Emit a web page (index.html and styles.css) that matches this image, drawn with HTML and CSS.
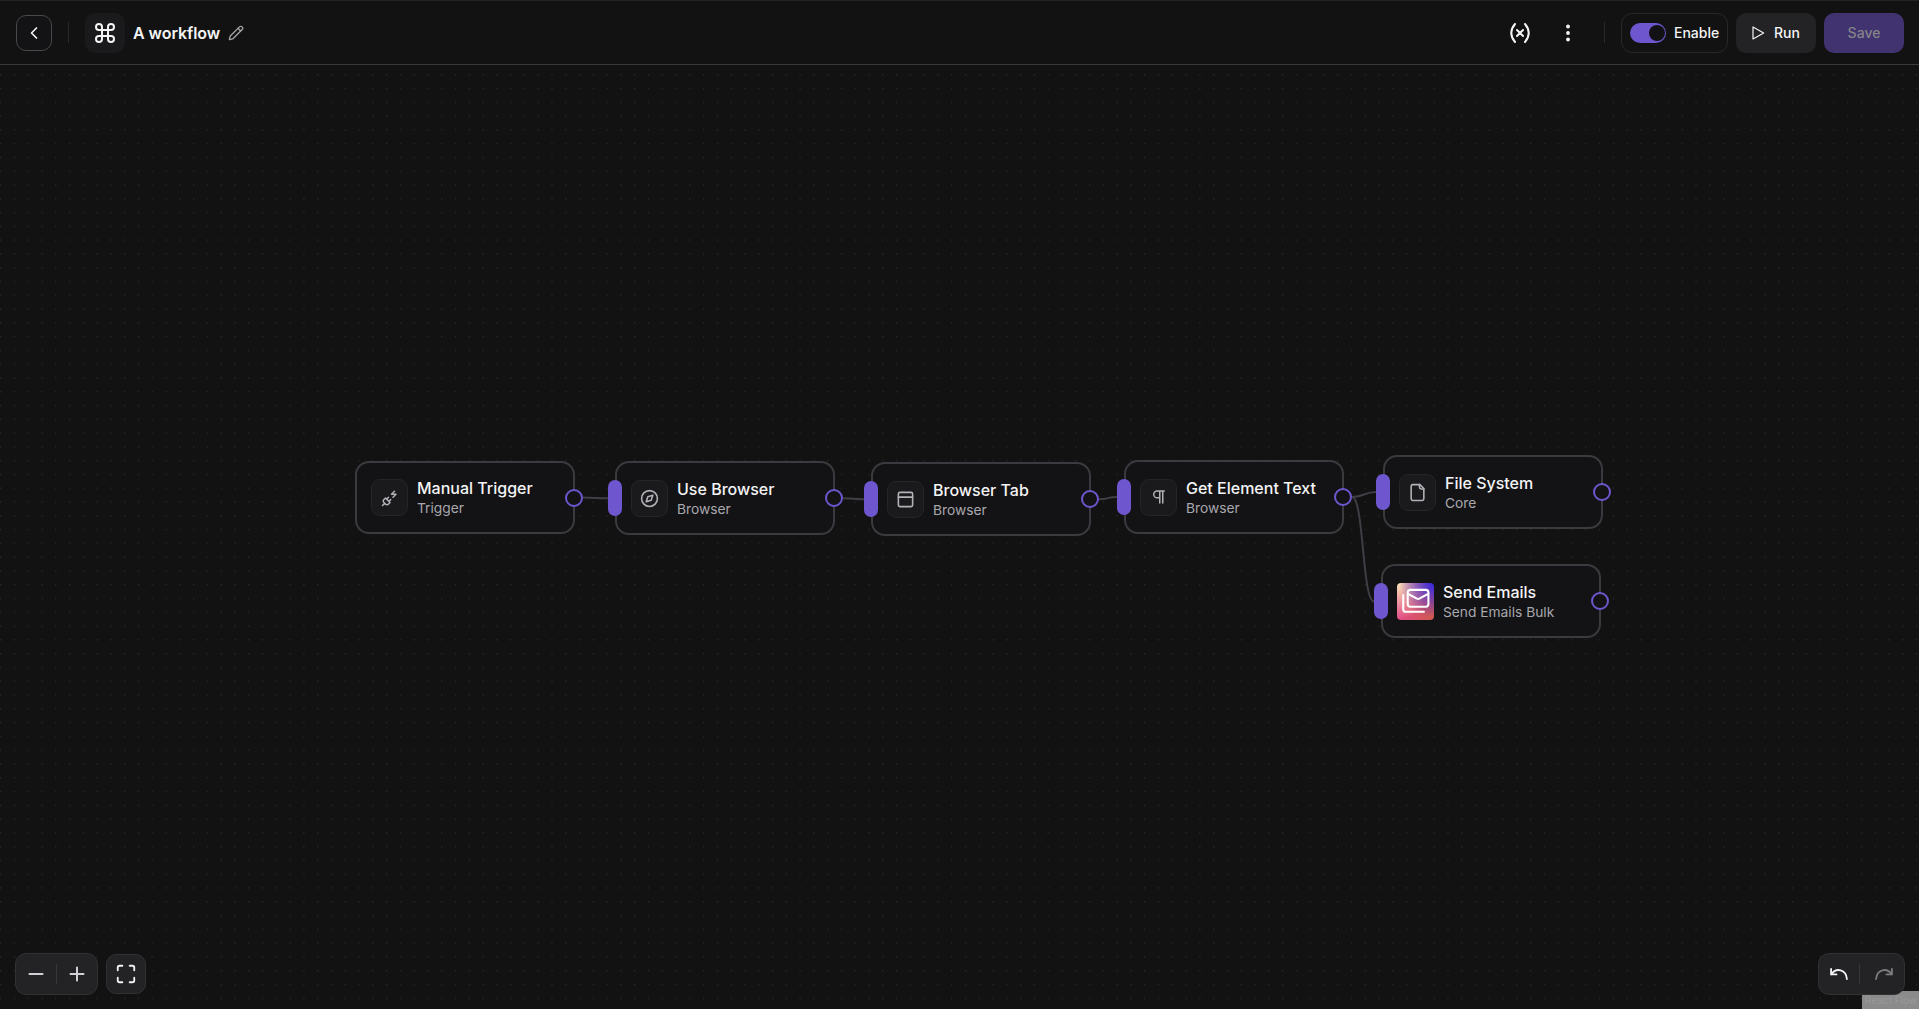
FILE: index.html
```html
<!DOCTYPE html>
<html lang="en">
<head>
<meta charset="utf-8">
<title>A workflow</title>
<link rel="stylesheet" href="styles.css">
</head>
<body>
<header class="topbar">
  <div class="group">
    <button class="back" aria-label="Back"><svg class="ic" width="20" height="20" viewBox="0 0 24 24" stroke-width="2"><path d="m15 18-6-6 6-6"/></svg></button>
    <span class="divider divider-left"></span>
    <span class="logo"><svg class="ic" width="24" height="24" viewBox="0 0 24 24" stroke-width="2"><path d="M15 6v12a3 3 0 1 0 3-3H6a3 3 0 1 0 3 3V6a3 3 0 1 0-3 3h12a3 3 0 1 0-3-3"/></svg></span>
    <h1 class="title">A workflow</h1>
    <svg class="ic pencil" width="16" height="16" viewBox="0 0 24 24" stroke-width="2"><path d="M21.2 6.8a2.8 2.8 0 0 0-4-4L3.8 16.200a2 2 0 0 0-.5.800L2 21.400a.5.5 0 0 0 .6.600l4.400-1.300a2 2 0 0 0 .800-.5z"/><path d="m15 5 4 4"/></svg>
  </div>
  <div class="group">
    <button class="plain" aria-label="Variables"><svg class="ic" width="24" height="24" viewBox="0 0 24 24" stroke-width="2"><path d="M7 3C2 9 2 15 7 21M17 3c5 6 5 12 0 18M9 9l6 6M15 9l-6 6"/></svg></button>
    <button class="plain" aria-label="More"><svg width="24" height="24" viewBox="0 0 24 24" fill="currentColor"><circle cx="12" cy="5.500" r="1.900"/><circle cx="12" cy="12" r="1.900"/><circle cx="12" cy="18.500" r="1.900"/></svg></button>
    <span class="divider divider-right"></span>
    <label class="enable"><span class="switch"><span class="knob"></span></span>Enable</label>
    <button class="run"><svg class="ic" width="16" height="16" viewBox="0 0 24 24" stroke-width="1.800"><path d="M4.500 3v18l16-9z"/></svg>Run</button>
    <button class="save">Save</button>
  </div>
</header>
<main class="canvas">
  <svg class="grid" width="1919" height="944">
    <defs><pattern id="dots" x="0" y="9" width="13.784" height="13.784" patternUnits="userSpaceOnUse"><circle cx=".69" cy=".69" r=".69"/></pattern></defs>
    <rect width="1919" height="944" fill="url(#dots)"/>
  </svg>
  <svg class="edges" width="1919" height="944">
    <path d="M583 432.500C596 432.500 595 433.300 608 433.300"/>
    <path d="M843 433.300C857 433.300 850 434.300 864 434.300"/>
    <path d="M1099 434.300C1110 434.300 1106 432 1117 432"/>
    <path d="M1352 432C1364 432 1364 427 1376 427"/>
    <path d="M1352 432C1364 432 1362 536.500 1374 536.500"/>
  </svg>

  <article class="node n1">
    <span class="tile"><svg class="ic" width="18" height="18" viewBox="0 0 24 24" stroke-width="2"><path d="M6.300 20.300a2.400 2.400 0 0 0 3.400 0L12 18l-6-6-2.300 2.300a2.400 2.400 0 0 0 0 3.400zM2 22l3-3M7.500 13.500 10 11M10.500 16.500 13 14M18 3l-4 4h6l-4 4"/></svg></span>
    <div class="text"><h2>Manual Trigger</h2><p>Trigger</p></div>
    <i class="out"></i>
  </article>
  <article class="node n2">
    <i class="in"></i>
    <span class="tile"><svg class="ic" width="19" height="19" viewBox="0 0 24 24" stroke-width="2"><circle cx="12" cy="12" r="10"/><path d="m16.200 7.800-2.100 6.300-6.300 2.100 2.100-6.300z"/></svg></span>
    <div class="text"><h2>Use Browser</h2><p>Browser</p></div>
    <i class="out"></i>
  </article>
  <article class="node n3">
    <i class="in"></i>
    <span class="tile"><svg class="ic" width="19" height="19" viewBox="0 0 24 24" stroke-width="2"><rect x="3" y="3" width="18" height="18" rx="2"/><path d="M3 9h18"/></svg></span>
    <div class="text"><h2>Browser Tab</h2><p>Browser</p></div>
    <i class="out"></i>
  </article>
  <article class="node n4">
    <i class="in"></i>
    <span class="tile"><svg class="ic" width="18" height="18" viewBox="0 0 24 24" stroke-width="2"><path d="M13 4v16M17 4v16M19 4H9.500a4.500 4.500 0 0 0 0 9H13"/></svg></span>
    <div class="text"><h2>Get Element Text</h2><p>Browser</p></div>
    <i class="out"></i>
  </article>
  <article class="node n5">
    <i class="in"></i>
    <span class="tile"><svg class="ic" width="19" height="19" viewBox="0 0 24 24" stroke-width="2"><path d="M15 2H6a2 2 0 0 0-2 2v16a2 2 0 0 0 2 2h12a2 2 0 0 0 2-2V7z"/><path d="M14.500 2v3.500a2 2 0 0 0 2 2H20"/></svg></span>
    <div class="text"><h2>File System</h2><p>Core</p></div>
    <i class="out"></i>
  </article>
  <article class="node n6">
    <i class="in"></i>
    <span class="tile tile-mail"><svg class="ic" width="31" height="31" viewBox="0 0 24 24" stroke-width="1.600"><rect x="6" y="3" width="16" height="13" rx="2"/><path d="m22 6-7.100 3.780c-.57.300-1.230.300-1.800 0L6 6M2.500 7v11c0 1.100.900 2 2 2h14"/></svg></span>
    <div class="text"><h2>Send Emails</h2><p>Send Emails Bulk</p></div>
    <i class="out"></i>
  </article>

  <span class="attribution">React Flow</span>
  <div class="controls">
    <div class="group">
      <div class="pair pair-zoom">
        <button aria-label="Zoom out"><svg class="ic" width="24" height="24" viewBox="0 0 24 24" stroke-width="2"><path d="M5.500 12h13"/></svg></button>
        <span class="sep"></span>
        <button aria-label="Zoom in"><svg class="ic" width="24" height="24" viewBox="0 0 24 24" stroke-width="2"><path d="M5.500 12h13M12 5.500v13"/></svg></button>
      </div>
      <button class="fit" aria-label="Fit view"><svg class="ic" width="22" height="22" viewBox="0 0 24 24" stroke-width="2"><path d="M8 3H5a2 2 0 0 0-2 2v3M21 8V5a2 2 0 0 0-2-2h-3M3 16v3a2 2 0 0 0 2 2h3M16 21h3a2 2 0 0 0 2-2v-3"/></svg></button>
    </div>
    <div class="pair pair-history">
      <button aria-label="Undo"><svg class="ic" width="20" height="20" viewBox="0 0 24 24" stroke-width="2.200"><path d="M2.500 6v6.500H9M2.500 12.500C8.500 4 20.500 6 21.500 18"/></svg></button>
      <span class="sep"></span>
      <button class="off" aria-label="Redo"><svg class="ic" width="20" height="20" viewBox="0 0 24 24" stroke-width="2.200"><path d="M21.500 6v6.500H15M21.500 12.500C15.500 4 3.500 6 2.500 18"/></svg></button>
    </div>
  </div>
</main>
</body>
</html>
```
FILE: styles.css
```css
* { box-sizing: border-box; }
body {
  margin: 0;
  height: 1009px;
  overflow: hidden;
  display: flex;
  flex-direction: column;
  background: #121212;
  color: #f4f4f5;
  font-family: Inter, sans-serif;
  font-size: 14px;
}
button { margin: 0; padding: 0; border: 0; background: none; color: inherit; font: inherit; }
h1, h2, p { margin: 0; }
svg { display: block; flex: none; }
.ic { fill: none; stroke: currentColor; stroke-linecap: round; stroke-linejoin: round; }
.group { display: flex; align-items: center; }

.topbar {
  height: 65px;
  flex: none;
  display: flex;
  justify-content: space-between;
  padding: 0 15px 0 16px;
  border-top: 1px solid #202225;
  border-bottom: 1px solid #3a3a3e;
}
.back {
  width: 36px;
  height: 36px;
  display: grid;
  place-items: center;
  border: 1px solid #48484d;
  border-radius: 10px;
  background: #131315;
}
.divider { width: 1px; height: 21px; background: #29292c; }
.divider-left { margin: 0 16px; }
.divider-right { margin: 0 16px 0 12px; }
.logo {
  width: 40px;
  height: 40px;
  display: grid;
  place-items: center;
  border-radius: 10px;
  background: #1a1a1c;
}
.title { margin: 0 8px; font-size: 16px; line-height: 24px; font-weight: 600; letter-spacing: -.05px; }
.pencil { color: #a3a3a8; }
.plain { width: 48px; height: 40px; display: grid; place-items: center; }
.enable {
  width: 107px;
  height: 40px;
  display: flex;
  align-items: center;
  gap: 8px;
  padding-left: 8px;
  border: 1px solid #28282b;
  border-radius: 11px;
  font-weight: 500;
}
.switch { width: 36px; height: 20px; display: flex; justify-content: flex-end; padding: 2px 1px; border-radius: 10px; background: #6e56cf; }
.knob { width: 16px; height: 16px; border-radius: 50%; background: #121214; }
.run, .save { width: 80px; height: 40px; margin-left: 8px; border-radius: 10px; font-weight: 500; }
.run { display: flex; align-items: center; justify-content: center; gap: 8px; padding-right: 2px; background: #232325; }
.save { background: #403370; color: #858388; }

.canvas { position: relative; flex: 1; display: flex; flex-direction: column; justify-content: flex-end; }
.grid, .edges { position: absolute; left: 0; top: 0; }
.grid { fill: #2e2e31; }
.edges { fill: none; stroke: #3e3e44; stroke-width: 2; }

.node {
  position: absolute;
  width: 220px;
  height: 74px;
  display: flex;
  align-items: center;
  gap: 9px;
  padding-left: 14px;
  border: 2px solid #3a3a3f;
  border-radius: 14px;
  background: #131315;
}
.n1 { left: 355px; top: 396px; height: 73px; }
.n2 { left: 615px; top: 396px; }
.n3 { left: 871px; top: 397px; }
.n4 { left: 1124px; top: 395px; }
.n5 { left: 1383px; top: 390px; }
.n6 { left: 1381px; top: 499px; }
.tile {
  width: 37px;
  height: 37px;
  flex: none;
  display: grid;
  place-items: center;
  border: 1px solid #252528;
  border-radius: 9px;
  background: #1a1a1c;
  color: #b2b1b7;
}
.tile-mail {
  border: 0;
  border-radius: 4px;
  color: #fff;
  background:
    radial-gradient(circle at 100% 0, #3128ea 0, transparent 66%),
    radial-gradient(circle at 0 0, #fbe6b8 0, transparent 70%),
    linear-gradient(90deg, #e34a8b, #cf5a4c);
}
.text { padding-top: 2px; }
.n1 .text { padding-top: 1px; }
.text h2 { font-size: 16px; line-height: 20px; font-weight: 450; white-space: nowrap; }
.text p { font-size: 13.780px; line-height: 20px; color: #a8a7ae; white-space: nowrap; }
.in { position: absolute; left: -9px; top: 17px; width: 14px; height: 36px; border-radius: 7px; background: #6e56cf; }
.out { position: absolute; right: -10px; top: 26px; width: 18px; height: 18px; border: 2px solid #6e56cf; border-radius: 50%; background: #131315; }

.controls { position: relative; display: flex; justify-content: space-between; align-items: center; padding: 0 14px 14px 15px; }
.controls .group { gap: 8px; }
.pair { display: flex; align-items: center; height: 42px; border: 1px solid #313134; border-radius: 11px; background: #232325; }
.pair-zoom { width: 83px; }
.pair-history { width: 87px; }
.pair button { flex: 1; display: grid; place-items: center; color: #d2d0d6; }
.pair .off { color: #7c7c80; }
.pair-history button { color: #f4f4f5; }
.pair-history .off { color: #7c7c80; }
.pair-history .sep { margin-right: 4px; }
.sep { width: 1px; height: 20px; background: #37373a; }
.fit { width: 40px; height: 40px; display: grid; place-items: center; border: 1px solid #313134; border-radius: 10px; background: #232325; }
.attribution {
  position: absolute;
  right: 0;
  bottom: 0;
  width: 57px;
  height: 18px;
  padding-left: 3px;
  background: #8b8b8b;
  color: #999;
  font-size: 10px;
  line-height: 19px;
  white-space: nowrap;
}
```
